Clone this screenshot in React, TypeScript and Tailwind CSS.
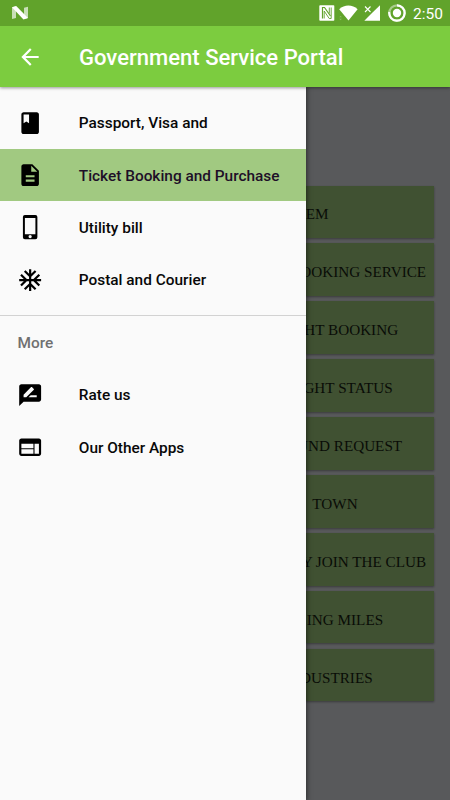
import React from "react";
import {
  MdAcUnit,
  MdArrowBack,
  MdClass,
  MdDescription,
  MdRateReview,
  MdWeb,
} from "react-icons/md";

type IconComponent = React.ComponentType<{ className?: string }>;
type Entry = { icon: IconComponent; label: string; active?: boolean };

function PhoneIcon({ className }: { className?: string }) {
  return (
    <svg className={className} viewBox="0 0 24 24" fill="currentColor">
      <path
        fillRule="evenodd"
        d="M7.2 1h9.6a1.8 1.8 0 0 1 1.8 1.8v18.4a1.8 1.8 0 0 1-1.8 1.8H7.2a1.8 1.8 0 0 1-1.8-1.8V2.8A1.8 1.8 0 0 1 7.2 1zM7.2 3.7v14.7h9.6V3.7zM12 19.1a1.5 1.5 0 1 0 0 3 1.5 1.5 0 0 0 0-3z"
      />
    </svg>
  );
}

const services: Entry[] = [
  { icon: MdClass, label: "Passport, Visa and" },
  { icon: MdDescription, label: "Ticket Booking and Purchase", active: true },
  { icon: PhoneIcon, label: "Utility bill" },
  { icon: MdAcUnit, label: "Postal and Courier" },
];

const more: Entry[] = [
  { icon: MdRateReview, label: "Rate us" },
  { icon: MdWeb, label: "Our Other Apps" },
];

const buttons = [
  { label: "EM", pad: "pr-[105px]" },
  { label: "OOKING SERVICE", pad: "pr-[7.5px]" },
  { label: "HT BOOKING", pad: "pr-[35.5px]" },
  { label: "GHT STATUS", pad: "pr-[41px]" },
  { label: "UND REQUEST", pad: "pr-[31.5px]" },
  { label: "TOWN", pad: "pr-[76px]" },
  { label: "Y JOIN THE CLUB", pad: "pr-[7.5px]" },
  { label: "ING MILES", pad: "pr-[50.5px]" },
  { label: "DUSTRIES", pad: "pr-[61px]" },
];

function DrawerRow({ icon: Icon, label, active }: Entry) {
  return (
    <li
      className={`flex h-[52.4px] items-center pl-[17.2px] ${active ? "bg-[#a1c981] text-[#1e0f28]" : "text-[#080808]"}`}
    >
      <Icon className="size-[26.3px] shrink-0 text-black" />
      <span className="ml-[35.3px] pt-[2px] text-[15.4px] font-medium whitespace-nowrap">{label}</span>
    </li>
  );
}

function StatusBar() {
  return (
    <div className="flex h-[26px] items-center bg-[#61a32b] text-white">
      <svg className="ml-[12px] h-[14px] w-[16px]" viewBox="0 0 16 14">
        <path d="M0 1.3 4 .3V12L0 13zM12 1.8l4-1V12l-4 1z" fill="#c9dfb8" />
        <path d="M0 1.3 4.2 0 16 12l-4.5 1.5z" fill="#fff" />
      </svg>
      <svg className="ml-auto h-[16px] w-[16px]" viewBox="0 0 16 16">
        <rect x=".3" y=".3" width="15" height="15.4" rx=".8" fill="#fff" />
        <path d="M3.5 13.5v-11h2l6 8.5" fill="none" stroke="#61a32b" strokeWidth="1.2" />
        <path d="M12.200 2.500v11h-2l-5-7.500v7.500M10.300 2.500v6" fill="none" stroke="#61a32b" strokeWidth=".9" />
      </svg>
      <svg className="ml-[4px] h-[16px] w-[19px]" viewBox="0 0 19 16">
        <path d="M.2 4.2C5.3-.6 13.5-.6 18.6 4.2L9.5 15.6z" fill="#fff" />
        <path d="m.3 12.2 1.3-1.5 1.3 1.5zm0 1.5 1.3 1.5 1.3-1.5z" fill="#8abb63" />
      </svg>
      <svg className="ml-[6px] h-[16px] w-[17px]" viewBox="0 0 17 16">
        <path d="M16 .2v15.5H.3L8 8z" fill="#fff" />
        <path d="m1 1.5 5.5 5.5m0-5.5L1 7" stroke="#fff" strokeWidth="1.1" />
      </svg>
      <svg className="ml-[7px] h-[18px] w-[18px]" viewBox="0 0 18 18">
        <circle cx="9" cy="9" r="7.7" fill="none" stroke="#a9cc8c" strokeWidth="2.2" />
        <path d="M9 1.3A7.7 7.7 0 1 1 1.3 8" fill="none" stroke="#fff" strokeWidth="2.2" />
        <circle cx="9" cy="9" r="4.2" fill="#fff" />
      </svg>
      <span className="mt-[3px] mr-[7px] ml-[7px] text-[15.5px] leading-none">2:50</span>
    </div>
  );
}

export default function App() {
  return (
    <div className="flex h-[800px] w-[450px] flex-col overflow-hidden bg-[#58595b] font-['Roboto',sans-serif]">
      <header className="z-20 shrink-0 shadow-[0_1px_3px_rgba(0,0,0,0.4)]">
        <StatusBar />
        <div className="flex h-[61.4px] items-center bg-[#7ccc3f] text-white">
          <MdArrowBack className="ml-[17px] size-[26px]" />
          <h1 className="ml-[36px] pt-[3px] text-[22.05px] leading-none font-medium whitespace-nowrap">
            Government Service Portal
          </h1>
        </div>
      </header>
      <div className="flex min-h-0 flex-1">
        <nav className="z-10 w-[306px] shrink-0 bg-[#fafafa] pt-[9.2px] shadow-[0_0_5px_1px_rgba(0,0,0,0.5)]">
          <ul>
            {services.map((s) => (
              <DrawerRow key={s.label} {...s} />
            ))}
          </ul>
          <section className="mt-[9px] border-t border-[#d2d2d2]">
            <h2 className="flex h-[52.5px] items-center pt-[2px] pl-[17.5px] text-[15.4px] font-medium text-[#707070]">More</h2>
            <ul>
              {more.map((m) => (
                <DrawerRow key={m.label} {...m} />
              ))}
            </ul>
          </section>
        </nav>
        <main className="flex min-w-0 flex-1 flex-col gap-[5.3px] overflow-hidden pt-[98.2px] pr-[16.4px]">
          {buttons.map((b) => (
            <div
              key={b.label}
              className={`flex h-[52.6px] shrink-0 items-center justify-end bg-[#405132] pt-[6px] font-['Liberation_Serif',serif] text-[15.2px] whitespace-nowrap text-[#090c07] shadow-[0_1px_2px_rgba(0,0,0,0.35)] ${b.pad}`}
            >
              {b.label}
            </div>
          ))}
        </main>
      </div>
    </div>
  );
}
